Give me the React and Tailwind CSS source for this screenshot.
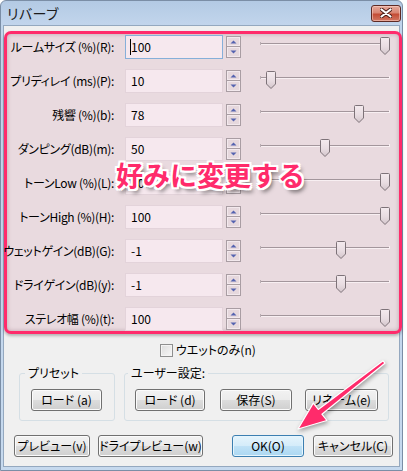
import React from "react";

const rows = [
  { label: "ルームサイズ (%)(R):", value: "100", thumb: 380, focused: true },
  { label: "プリディレイ (ms)(P):", value: "10", thumb: 266 },
  { label: "残響 (%)(b):", value: "78", thumb: 354 },
  { label: "ダンピング(dB)(m):", value: "50", thumb: 320 },
  { label: "トーンLow (%)(L):", value: "100", thumb: 380 },
  { label: "トーンHigh (%)(H):", value: "100", thumb: 380 },
  { label: "ウェットゲイン(dB)(G):", value: "-1", thumb: 336 },
  { label: "ドライゲイン(dB)(y):", value: "-1", thumb: 336 },
  { label: "ステレオ幅 (%)(t):", value: "100", thumb: 380 },
];

function Spinner() {
  return (
    <div className="flex flex-col w-[15px] h-[22px] ml-[3px] gap-0">
      <div className="h-[11px] border border-[#a99da3] bg-[#e6d8dd] shadow-[inset_0_0_0_1px_#f3e9ed] flex items-center justify-center">
        <svg width="7" height="4" viewBox="0 0 7 4">
          <path d="M0.5 3.5 L3.5 0.5 L6.5 3.5 Z" fill="#5563b0" />
        </svg>
      </div>
      <div className="h-[11px] border border-[#a99da3] border-t-0 bg-[#e6d8dd] shadow-[inset_0_0_0_1px_#f3e9ed] flex items-center justify-center">
        <svg width="7" height="4" viewBox="0 0 7 4">
          <path d="M0.5 0.5 L3.5 3.5 L6.5 0.5 Z" fill="#5563b0" />
        </svg>
      </div>
    </div>
  );
}

function Slider({ thumb }) {
  const x = thumb - 260;
  return (
    <svg width="132" height="24" viewBox="0 0 132 24" className="ml-[19px] shrink-0 overflow-visible">
      <rect x="0" y="8" width="130" height="1" fill="#a3969c" />
      <rect x="0" y="9" width="130" height="1" fill="#f8eff2" />
      <rect x="0" y="7" width="1" height="3" fill="#b9adb2" />
      <rect x="129" y="7" width="1" height="3" fill="#f8eff2" />
      <defs>
        <linearGradient id="thumbg" x1="0" y1="0" x2="0" y2="1">
          <stop offset="0" stopColor="#f4eaee" />
          <stop offset="0.55" stopColor="#e8dce1" />
          <stop offset="1" stopColor="#d3c5cb" />
        </linearGradient>
      </defs>
      <path
        d={`M${x + 0.5} 3.5 Q${x + 0.5} 2.5 ${x + 1.5} 2.5 L${x + 8.5} 2.5 Q${x + 9.5} 2.5 ${x + 9.5} 3.5 L${x + 9.5} 15 L${x + 5} 19.5 L${x + 0.5} 15 Z`}
        fill="url(#thumbg)"
        stroke="#7d7278"
        strokeWidth="1"
      />
    </svg>
  );
}

function Btn({ children, w, primary }) {
  const base =
    "h-[22px] rounded-[3px] border flex items-center justify-center text-[12px] leading-none text-black shrink-0 whitespace-nowrap";
  const look = primary
    ? "border-[#3c7fb1] bg-[linear-gradient(to_bottom,#e5f4fc_0%,#d4ecfa_50%,#c0e2f7_50%,#abd7f2_100%)] shadow-[inset_0_0_0_1px_#e6f5fd]"
    : "border-[#707070] bg-[linear-gradient(to_bottom,#f2f2f2_0%,#ebebeb_50%,#dddddd_50%,#cfcfcf_100%)] shadow-[inset_0_0_0_1px_#fbfbfb]";
  return (
    <div className={`${base} ${look}`} style={{ width: w }}>
      {children}
    </div>
  );
}

export default function App() {
  return (
    <div className="w-[407px] h-[471px] bg-white font-['Noto_Sans_CJK_JP','Noto_Sans',sans-serif] [font-feature-settings:'palt'] overflow-hidden">
      <div className="relative w-[403px] h-[471px] rounded-t-[6px] border border-[#7b8ea6] bg-[linear-gradient(to_bottom,#b3cae4_0px,#c2d5ec_24px,#c6d9ee_100%)] flex flex-col">
        {/* Title bar */}
        <div className="h-[24px] flex items-center justify-between pl-[6px] pr-[1px] shrink-0">
          <span className="text-[14px] text-[#1b1b1b] leading-none tracking-[0.5px]">リバーブ</span>
          <div className="w-[30px] h-[17px] rounded-[3px] border border-[#5e2a24] bg-[linear-gradient(to_bottom,#e5a99b_0%,#d98573_45%,#c44c35_55%,#d27763_100%)] shadow-[inset_0_0_0_1px_rgba(255,220,210,0.5)] flex items-center justify-center">
            <svg width="12" height="10" viewBox="0 0 12 10">
              <path d="M1.5 1.5 L10.5 8.5 M10.5 1.5 L1.5 8.5" stroke="#4a1c16" strokeWidth="4" strokeLinecap="round" />
              <path d="M1.5 1.5 L10.5 8.5 M10.5 1.5 L1.5 8.5" stroke="#ffffff" strokeWidth="2.2" strokeLinecap="round" />
            </svg>
          </div>
        </div>

        {/* Client area */}
        <div className="mx-[2px] mb-[3px] flex-1 bg-[#f0f0f0] border border-[#94a8bf] flex flex-col text-[12px] text-black">
          {/* Highlight box */}
          <div className="relative mt-[5px] ml-0 w-[398px] h-[303px] shrink-0 rounded-[7px] border-[3px] border-[#ff2b6b] bg-[#e9dadf] shadow-[inset_0_0_4px_rgba(110,60,80,0.35),0_2px_3px_rgba(0,0,0,0.25)] flex flex-col gap-[10px] pt-[1px]">
            {rows.map((r, i) => (
              <div key={i} className="flex items-center h-[24px]">
                <div className="w-[107px] flex justify-end whitespace-nowrap leading-none shrink-0 tracking-[-0.3px]">
                  {r.label}
                </div>
                <div
                  className={`ml-[11px] w-[98px] h-[24px] shrink-0 flex items-center pl-[5px] bg-[#f6e8ee] border ${
                    r.focused ? "border-[#86afd9]" : "border-[#e3d3da]"
                  }`}
                >
                  {r.focused && <span className="w-px h-[16px] bg-black -ml-[1px] mr-0" />}
                  <span className="leading-none">{r.value}</span>
                </div>
                <Spinner />
                <Slider thumb={r.thumb} />
              </div>
            ))}
            <div className="absolute left-[109px] top-[127px] text-[27px] leading-none font-bold text-[#ff2b6b] whitespace-nowrap [font-feature-settings:normal] [text-shadow:2px_0_0_#fff,-2px_0_0_#fff,0_2px_0_#fff,0_-2px_0_#fff,2px_2px_0_#fff,-2px_-2px_0_#fff,2px_-2px_0_#fff,-2px_2px_0_#fff,3px_4px_4px_rgba(0,0,0,0.55)]">
              好みに変更する
            </div>
          </div>

          {/* Checkbox */}
          <div className="mt-[8px] h-[16px] flex items-center pl-[156px]">
            <div className="w-[13px] h-[13px] border border-[#8e8f8f] bg-[linear-gradient(135deg,#dcdcdc,#f8f8f8)] shadow-[inset_0_0_0_1px_#f4f4f4]" />
            <span className="ml-[3px] leading-none">ウエットのみ(n)</span>
          </div>

          {/* Group boxes */}
          <div className="mt-[7px] flex">
            <fieldset className="ml-[15px] w-[96px] h-[56px] border border-[#d5dfe5] rounded-[3px] p-0">
              <legend className="ml-[5px] px-[3px] leading-[16px] text-[12px]">プリセット</legend>
              <div className="mt-[8px] pl-[11px]">
                <Btn w={71}>ロード (a)</Btn>
              </div>
            </fieldset>
            <fieldset className="ml-[9px] w-[265px] h-[56px] border border-[#d5dfe5] rounded-[3px] p-0">
              <legend className="ml-[3px] px-[3px] leading-[16px] text-[12px]">ユーザー設定:</legend>
              <div className="mt-[8px] pl-[10px] flex">
                <Btn w={70}>ロード (d)</Btn>
                <div className="w-[15px]" />
                <Btn w={72}>保存(S)</Btn>
                <div className="w-[13px]" />
                <Btn w={73}>リネーム(e)</Btn>
              </div>
            </fieldset>
          </div>

          {/* Bottom buttons */}
          <div className="mt-[14px] flex pl-[10px]">
            <Btn w={76}>プレビュー(v)</Btn>
            <div className="w-[8px]" />
            <Btn w={105}>ドライプレビュー(w)</Btn>
            <div className="w-[29px]" />
            <Btn w={72} primary>
              OK(O)
            </Btn>
            <div className="w-[9px]" />
            <Btn w={80}>キャンセル(C)</Btn>
          </div>
        </div>

        {/* Arrow annotation */}
        <svg
          width="110"
          height="90"
          viewBox="290 350 110 90"
          className="absolute left-[289px] top-[349px] pointer-events-none [filter:drop-shadow(1px_2px_2px_rgba(0,0,0,0.35))]"
        >
          <polygon
            points="384.9,363.2 321.9,414.2 326.9,420.5 298,429 313.3,403.1 318.3,409.4 383.1,360.8"
            fill="#ff2b6b"
            stroke="#ffffff"
            strokeWidth="1.2"
            strokeLinejoin="round"
          />
        </svg>
      </div>
    </div>
  );
}
